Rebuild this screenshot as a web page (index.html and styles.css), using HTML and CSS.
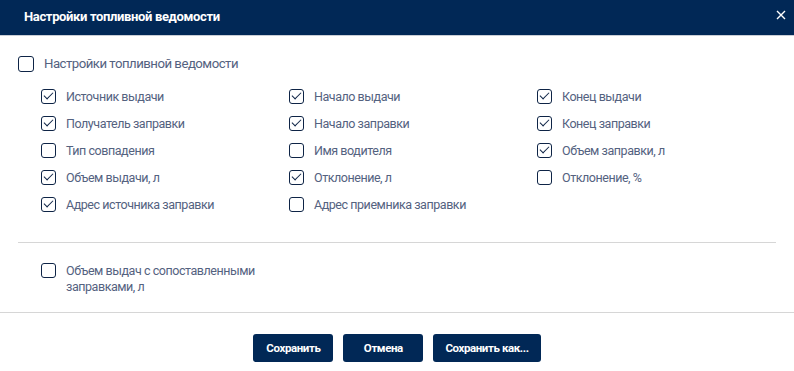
FILE: index.html
```html
<!DOCTYPE html>
<html lang="ru">
<head>
    <meta charset="UTF-8">
    <title>Настройки топливной ведомости</title>
    <link rel="stylesheet" href="styles.css">
</head>
<body>
    <div class="modal">
        <div class="modal-header">
            <span class="modal-title">Настройки топливной ведомости</span>
            <svg class="close" width="10" height="10" viewBox="0 0 10 10">
                <path d="M1 1 L9 9 M9 1 L1 9" stroke="#fff" stroke-width="1.4" fill="none"/>
            </svg>
        </div>
        <div class="modal-body">
            <label class="check main">
                <span class="box"></span>
                <span class="text">Настройки топливной ведомости</span>
            </label>
            <div class="grid">
                <label class="check"><span class="box on"></span><span class="text">Источник выдачи</span></label>
                <label class="check"><span class="box on"></span><span class="text">Начало выдачи</span></label>
                <label class="check"><span class="box on"></span><span class="text">Конец выдачи</span></label>
                <label class="check"><span class="box on"></span><span class="text">Получатель заправки</span></label>
                <label class="check"><span class="box on"></span><span class="text">Начало заправки</span></label>
                <label class="check"><span class="box on"></span><span class="text">Конец заправки</span></label>
                <label class="check"><span class="box"></span><span class="text">Тип совпадения</span></label>
                <label class="check"><span class="box"></span><span class="text">Имя водителя</span></label>
                <label class="check"><span class="box on"></span><span class="text">Объем заправки, л</span></label>
                <label class="check"><span class="box on"></span><span class="text">Объем выдачи, л</span></label>
                <label class="check"><span class="box on"></span><span class="text">Отклонение, л</span></label>
                <label class="check"><span class="box"></span><span class="text">Отклонение, %</span></label>
                <label class="check"><span class="box on"></span><span class="text">Адрес источника заправки</span></label>
                <label class="check"><span class="box"></span><span class="text">Адрес приемника заправки</span></label>
            </div>
            <hr class="sep">
            <div class="extra">
                <label class="check"><span class="box"></span><span class="text">Объем выдач с сопоставленными заправками, л</span></label>
            </div>
        </div>
        <div class="modal-footer">
            <button class="btn">Сохранить</button>
            <button class="btn">Отмена</button>
            <button class="btn">Сохранить как...</button>
        </div>
    </div>
</body>
</html>
```

FILE: styles.css
```css
* {
    box-sizing: border-box;
}
body {
    margin: 0;
    font-family: Roboto, "Liberation Sans", sans-serif;
    background: #fff;
}
.modal {
    width: 794px;
    height: 371px;
    display: flex;
    flex-direction: column;
}
.modal-header {
    height: 36px;
    background-color: #012856;
    border-bottom: 1px solid #c9ced6;
    display: flex;
    align-items: center;
    justify-content: space-between;
    padding: 0 8px 0 24px;
}
.modal-title {
    color: #fff;
    font-weight: bold;
    font-size: 13px;
    letter-spacing: -0.35px;
    margin-top: -3px;
}
.close {
    margin-top: -5px;
}
.modal-body {
    padding: 20px 18px 0 18px;
    height: 277px;
    border-bottom: 1px solid #d6d6d6;
}
.check {
    display: flex;
    align-items: flex-start;
    color: #54627f;
    font-size: 12.5px;
    letter-spacing: -0.45px;
    line-height: 16px;
}
.box {
    flex: none;
    width: 15px;
    height: 15px;
    border: 1.5px solid #0e2446;
    border-radius: 3px;
    margin-right: 10px;
    position: relative;
}
.box.on::after {
    content: "";
    position: absolute;
    left: 3.5px;
    top: 0px;
    width: 4px;
    height: 8px;
    border-right: 1.5px solid #0e2446;
    border-bottom: 1.5px solid #0e2446;
    transform: rotate(45deg);
}
.main {
    font-size: 13.2px;
    letter-spacing: -0.5px;
}
.main .box {
    width: 16px;
    height: 16px;
}
.grid {
    display: grid;
    grid-template-columns: 248px 248px 248px;
    row-gap: 11px;
    padding: 17px 0 0 23px;
}
.sep {
    border: 0;
    border-top: 1px solid #d6d6d6;
    margin: 29px 0 0 0;
}
.extra {
    padding: 20px 0 0 23px;
    width: 265px;
}
.modal-footer {
    display: flex;
    justify-content: center;
    gap: 10px;
    padding-top: 21px;
}
.btn {
    height: 28px;
    min-width: 80px;
    padding: 0 12px;
    background-color: #012856;
    color: #fff;
    border: none;
    border-radius: 3px;
    font-family: Roboto, "Liberation Sans", sans-serif;
    font-weight: bold;
    font-size: 11.5px;
    letter-spacing: -0.4px;
}
```
